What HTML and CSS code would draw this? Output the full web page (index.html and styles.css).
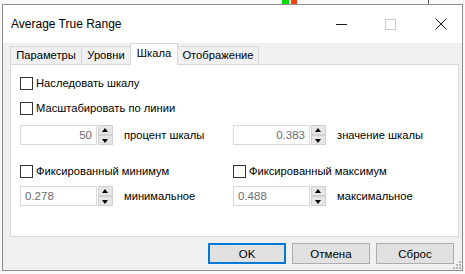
FILE: index.html
```html
<!DOCTYPE html>
<html>
<head>
<meta charset="utf-8">
<link rel="stylesheet" href="styles.css">
</head>
<body>
<div class="chart">
  <span class="bar bar-green"></span>
  <span class="bar bar-red"></span>
  <span class="vline"></span>
</div>
<div class="dialog">
  <div class="titlebar">
    <span class="title">Average True Range</span>
    <span class="caption">
      <svg class="cap cap-min" width="11" height="10" viewBox="0 0 11 10"><line x1="0" y1="5.5" x2="11" y2="5.5" stroke="#1a1a1a" stroke-width="1"/></svg>
      <svg class="cap cap-max" width="11" height="11" viewBox="0 0 11 11"><rect x="0.5" y="0.5" width="10" height="10" fill="none" stroke="#cccccc" stroke-width="1"/></svg>
      <svg class="cap cap-close" width="12" height="12" viewBox="0 0 12 12"><path d="M0.5 0.5 L11.5 11.5 M11.5 0.5 L0.5 11.5" stroke="#1a1a1a" stroke-width="1"/></svg>
    </span>
  </div>
  <div class="content">
    <div class="tabs">
      <span class="tab">Параметры</span>
      <span class="tab">Уровни</span>
      <span class="tab tab-active">Шкала</span>
      <span class="tab">Отображение</span>
    </div>
    <div class="panel">
      <label class="check"><span class="box"></span>Наследовать шкалу</label>
      <label class="check row2"><span class="box"></span>Масштабировать по линии</label>
      <div class="grid">
        <div class="spin-row">
          <span class="input right">50</span>
          <span class="spin"><span class="sb up"></span><span class="sb down"></span></span>
          <span class="lbl">процент шкалы</span>
        </div>
        <div class="spin-row">
          <span class="input right">0.383</span>
          <span class="spin"><span class="sb up"></span><span class="sb down"></span></span>
          <span class="lbl">значение шкалы</span>
        </div>
        <label class="check"><span class="box"></span>Фиксированный минимум</label>
        <label class="check"><span class="box"></span>Фиксированный максимум</label>
        <div class="spin-row">
          <span class="input">0.278</span>
          <span class="spin"><span class="sb up"></span><span class="sb down"></span></span>
          <span class="lbl">минимальное</span>
        </div>
        <div class="spin-row">
          <span class="input">0.488</span>
          <span class="spin"><span class="sb up"></span><span class="sb down"></span></span>
          <span class="lbl">максимальное</span>
        </div>
      </div>
    </div>
    <div class="footer">
      <button class="btn btn-default">OK</button>
      <button class="btn">Отмена</button>
      <button class="btn">Сброс</button>
    </div>
    <svg class="grip" width="8" height="8" viewBox="0 0 8 8">
      <rect x="6" y="0" width="2" height="2" fill="#b8b8b8"/>
      <rect x="3" y="3" width="2" height="2" fill="#b8b8b8"/>
      <rect x="6" y="3" width="2" height="2" fill="#b8b8b8"/>
      <rect x="0" y="6" width="2" height="2" fill="#b8b8b8"/>
      <rect x="3" y="6" width="2" height="2" fill="#b8b8b8"/>
      <rect x="6" y="6" width="2" height="2" fill="#b8b8b8"/>
    </svg>
  </div>
</div>
</body>
</html>
```
FILE: styles.css
```css
* { box-sizing: border-box; }
html, body { margin: 0; padding: 0; }
body {
  width: 465px;
  height: 274px;
  overflow: hidden;
  background: #fbf8f8;
  font-family: "Liberation Sans", Arial, sans-serif;
  font-size: 11.2px;
  color: #000;
  position: relative;
}
.chart { position: absolute; left: 0; top: 0; width: 465px; height: 5px; }
.bar { position: absolute; top: 0; height: 5px; }
.bar-green { left: 282px; width: 7px; background: #00e000; }
.bar-red { left: 291px; width: 6px; background: #f04010; }
.vline { position: absolute; left: 428px; top: 0; width: 1px; height: 5px; background: #555; }

.dialog {
  position: relative;
  margin: 4px 0 0 2px;
  width: 461px;
  height: 267px;
  border: 1px solid #8c8c8c;
  background: #f0f0f0;
  display: flex;
  flex-direction: column;
}
.titlebar {
  height: 38px;
  background: #fff;
  display: flex;
  align-items: center;
  padding-left: 8px;
  flex: none;
}
.title { font-size: 12px; color: #000; flex: 1; }
.caption { display: flex; align-items: center; padding-right: 15px; }
.cap { display: block; }
.cap-min { margin-right: 38px; }
.cap-max { margin-right: 39px; }

.content {
  flex: 1;
  position: relative;
  padding: 0 3px 0 7px;
  display: flex;
  flex-direction: column;
}
.tabs {
  display: flex;
  align-items: flex-end;
  height: 21px;
  padding-top: 2px;
}
.tab {
  height: 18px;
  line-height: 16px;
  border: 1px solid #d9d9d9;
  border-bottom: none;
  background: #f0f0f0;
  text-align: center;
  margin-right: -1px;
  white-space: nowrap;
}
.tab:nth-child(1) { width: 72px; }
.tab:nth-child(2) { width: 50px; }
.tab:nth-child(4) { width: 82px; }
.tab-active {
  width: 48px;
  background: #fff;
  position: relative;
  z-index: 1;
  margin-bottom: -1px;
  height: 22px;
  line-height: 19px;
}
.panel {
  height: 173px;
  background: #fff;
  border: 1px solid #d9d9d9;
  padding: 11px 0 0 9px;
  display: flex;
  flex-direction: column;
}
.check {
  display: flex;
  align-items: center;
  height: 14px;
  white-space: nowrap;
}
.box {
  width: 13px;
  height: 13px;
  border: 1px solid #333;
  background: #fff;
  margin-right: 3px;
  flex: none;
}
.row2 { margin-top: 11px; }
.grid {
  display: grid;
  grid-template-columns: 213px 1fr;
  row-gap: 0;
  margin-top: 10px;
}
.grid > .check { margin-top: 19px; margin-bottom: 8px; }
.spin-row { display: flex; align-items: center; height: 20px; }
.input {
  width: 77px;
  height: 20px;
  border: 1px solid #d9d9d9;
  background: #fff;
  color: #6d6d6d;
  line-height: 18px;
  padding: 0 4px;
  font-size: 11.5px;
}
.input.right { text-align: right; }
.spin {
  width: 15px;
  height: 20px;
  margin-left: 1px;
  display: flex;
  flex-direction: column;
  justify-content: space-between;
}
.sb {
  height: 10px;
  background: #e6e6e6;
  border: 1px solid #d0d0d0;
  position: relative;
}
.sb::after {
  content: "";
  position: absolute;
  left: 3px;
  width: 0; height: 0;
  border-left: 3.5px solid transparent;
  border-right: 3.5px solid transparent;
}
.sb.up::after { top: 2px; border-bottom: 4px solid #000; }
.sb.down::after { top: 3px; border-top: 4px solid #000; }
.lbl { margin-left: 11px; white-space: nowrap; }

.footer {
  display: flex;
  justify-content: flex-end;
  gap: 6px;
  padding-top: 6px;
  padding-right: 5px;
}
.btn {
  width: 78px;
  height: 21px;
  background: #e1e1e1;
  border: 1px solid #adadad;
  font-family: inherit;
  font-size: 11.5px;
  color: #000;
  padding: 0;
}
.btn-default { border: 1px solid #0078d7; box-shadow: inset 0 0 0 1px #0078d7; }
.grip { position: absolute; right: 1px; bottom: 1px; }
```
